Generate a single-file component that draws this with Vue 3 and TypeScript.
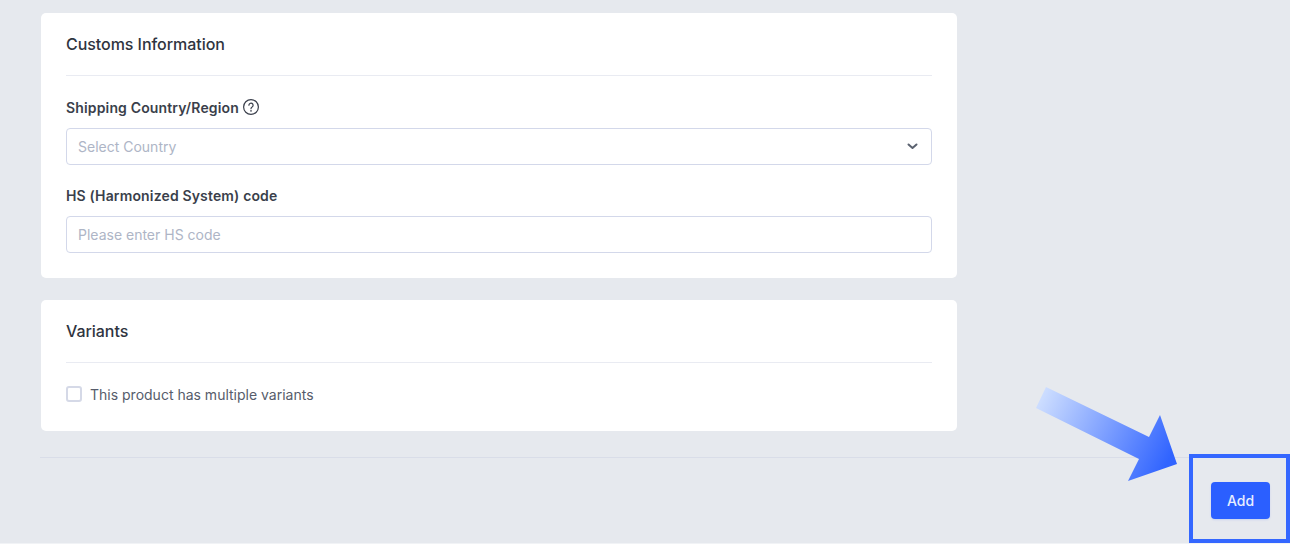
<script setup lang="ts">
const chevron = 'M1.5 1.5 L5.5 5 L9.5 1.5'
</script>

<template>
  <div class="page">
    <div class="cards">
      <section class="card first">
        <h2 class="title">Customs Information</h2>
        <div class="body">
          <label class="label">
            Shipping Country/Region
            <svg class="help" width="18" height="18" viewBox="0 0 18 18" fill="none">
              <circle cx="9" cy="9" r="7.4" stroke="#3a3f4b" stroke-width="1.2" />
              <path d="M6.9 7.2a2.1 2.1 0 1 1 3.2 1.8c-.7.4-1.1.9-1.1 1.7" stroke="#3a3f4b" stroke-width="1.2" stroke-linecap="round" />
              <circle cx="9" cy="12.9" r=".8" fill="#3a3f4b" />
            </svg>
          </label>
          <div class="input select">
            <span>Select Country</span>
            <svg width="11" height="7" viewBox="0 0 11 7" fill="none">
              <path :d="chevron" stroke="#5b6270" stroke-width="2" stroke-linecap="round" stroke-linejoin="round" />
            </svg>
          </div>
          <label class="label second-label">HS (Harmonized System) code</label>
          <div class="input"><span>Please enter HS code</span></div>
        </div>
      </section>

      <section class="card">
        <h2 class="title">Variants</h2>
        <div class="check-row">
          <span class="checkbox"></span>
          <span class="check-text">This product has multiple variants</span>
        </div>
      </section>
    </div>

    <footer class="footer">
      <button class="add" type="button">Add</button>
    </footer>

    <svg class="arrow" width="150" height="100" viewBox="0 0 150 100">
      <defs>
        <linearGradient id="arrowFill" gradientUnits="userSpaceOnUse" x1="4" y1="10" x2="135" y2="72">
          <stop offset="0" stop-color="#d0e0ff" />
          <stop offset="1" stop-color="#3164ff" />
        </linearGradient>
      </defs>
      <polygon points="11,2 1,23 104,74 93,96 142,79 125,30 114,52" fill="url(#arrowFill)" />
    </svg>
    <div class="highlight"></div>
  </div>
</template>

<style scoped>
.page {
  position: relative;
  box-sizing: border-box;
  width: 1290px;
  height: 544px;
  overflow: hidden;
  padding: 13px 0 0 40px;
  background: #e6e9ee;
  border-bottom: 1px solid #f1f3f6;
  font-family: Inter, "Liberation Sans", sans-serif;
  color: #2b303b;
}
.cards {
  padding-left: 1px;
}
.card {
  box-sizing: border-box;
  width: 916px;
  padding: 0 25px;
  background: #fff;
  border-radius: 5px;
}
.first {
  height: 265px;
  margin-bottom: 22px;
}
.title {
  margin: 0;
  height: 62px;
  border-bottom: 1px solid #e9ebf2;
  font-size: 16px;
  font-weight: 450;
  letter-spacing: -0.05px;
  line-height: 62px;
  color: #2f3440;
}
.body {
  padding-top: 21px;
}
.label {
  display: flex;
  align-items: center;
  gap: 3px;
  height: 20px;
  font-size: 14px;
  font-weight: 600;
  letter-spacing: 0.15px;
  color: #3a3f4b;
}
.second-label {
  margin-top: 20px;
}
.help {
  flex: none;
}
.input {
  box-sizing: border-box;
  display: flex;
  align-items: center;
  justify-content: space-between;
  height: 37px;
  margin-top: 11px;
  padding: 0 13px 0 11px;
  border: 1px solid #d3d8ea;
  border-radius: 4px;
  font-size: 14px;
  color: #aeb5c6;
}
.check-row {
  display: flex;
  align-items: center;
  gap: 8px;
  height: 20px;
  margin-top: 21px;
  padding-bottom: 27px;
}
.checkbox {
  box-sizing: border-box;
  width: 16px;
  height: 16px;
  border: 2px solid #d5d9e7;
  border-radius: 3px;
}
.check-text {
  font-size: 14px;
  color: #565c6b;
}
.footer {
  display: flex;
  justify-content: flex-end;
  margin-top: 26px;
  padding: 24px 20px 0 0;
  border-top: 1px solid #d9dde8;
}
.add {
  width: 59px;
  height: 37px;
  border: 0;
  border-radius: 4px;
  background: #2b5fff;
  box-shadow: 0 1px 2px rgba(43, 95, 255, 0.15);
  color: #e8eeff;
  font-family: inherit;
  font-size: 14px;
  font-weight: 500;
}
.arrow {
  position: absolute;
  left: 1035px;
  top: 385px;
}
.highlight {
  position: absolute;
  left: 1189px;
  top: 454px;
  box-sizing: border-box;
  width: 101px;
  height: 89px;
  border: 4.5px solid #3467ff;
}
</style>
